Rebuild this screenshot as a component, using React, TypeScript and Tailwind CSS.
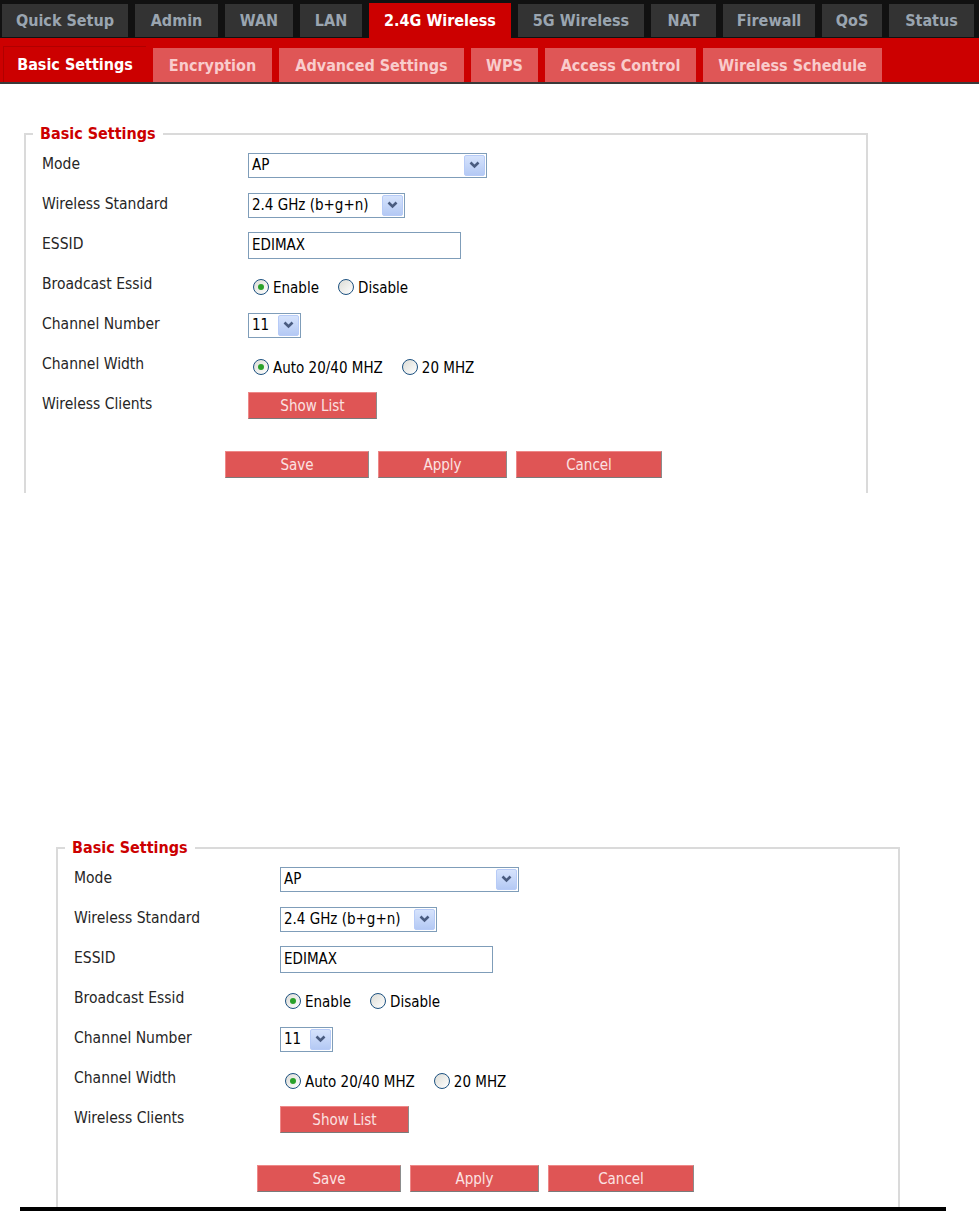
import React from "react";

const tabs = [
  { name: "Quick Setup", w: "w-[126px]" },
  { name: "Admin", w: "w-[83px]" },
  { name: "WAN", w: "w-[68px]" },
  { name: "LAN", w: "w-[62px]" },
  { name: "2.4G Wireless", w: "w-[142px]", active: true },
  { name: "5G Wireless", w: "w-[126px]" },
  { name: "NAT", w: "w-[65px]" },
  { name: "Firewall", w: "w-[92px]" },
  { name: "QoS", w: "w-[60px]" },
  { name: "Status", w: "w-[85px]" },
];

const subTabs = [
  { name: "Basic Settings", w: "w-[143px]", active: true },
  { name: "Encryption", w: "w-[119px]" },
  { name: "Advanced Settings", w: "w-[185px]" },
  { name: "WPS", w: "w-[67px]" },
  { name: "Access Control", w: "w-[151px]" },
  { name: "Wireless Schedule", w: "w-[179px]" },
];

const font = "font-['DejaVu_Sans_Condensed','DejaVu_Sans',sans-serif]";

const TopNav = () => (
  <div className={font}>
    <div className="flex h-[38px] items-end gap-[7px] bg-[#111111] pl-[2px]">
      {tabs.map((t) =>
        t.active ? (
          <div
            key={t.name}
            className={`${t.w} flex h-[35px] items-center justify-center bg-[#cc0000] text-[16px] font-bold text-white`}
          >
            {t.name}
          </div>
        ) : (
          <div
            key={t.name}
            className={`${t.w} mb-[1px] flex h-[33px] items-center justify-center bg-[#333333] text-[16px] font-bold text-[#9aa5b0]`}
          >
            {t.name}
          </div>
        )
      )}
    </div>
    <div className="flex h-[44px] items-end gap-[7px] bg-[#cc0000] pl-[3px]">
      {subTabs.map((t) =>
        t.active ? (
          <div
            key={t.name}
            className={`${t.w} flex h-[36px] items-center justify-center border-l border-t border-[#b00000] bg-[#cc0000] text-[16px] font-bold text-white`}
          >
            {t.name}
          </div>
        ) : (
          <div
            key={t.name}
            className={`${t.w} flex h-[34px] items-center justify-center bg-[#df5656] pt-[2px] text-[16px] font-bold text-[#f9cccc]`}
          >
            {t.name}
          </div>
        )
      )}
    </div>
    <div className="h-[2px] bg-[#3a3a3a]" />
  </div>
);

const Chevron = () => (
  <svg width="11" height="8" viewBox="0 0 11 8">
    <path d="M1.5 1.5 L5.5 5.5 L9.5 1.5" fill="none" stroke="#4a5c80" strokeWidth="2.6" />
  </svg>
);

const Select = ({ value, className }: { value: string; className: string }) => (
  <div
    className={`${className} flex h-[25px] items-center border border-[#7f9db9] bg-white pl-[3px] pr-[1px] text-[15px] text-black`}
  >
    <span className="whitespace-nowrap">{value}</span>
    <div className="ml-auto flex h-[21px] w-[21px] items-center justify-center rounded-[2px] border border-[#b7cbf7] bg-gradient-to-b from-[#d6e3fc] to-[#b4c9f4]">
      <Chevron />
    </div>
  </div>
);

const Radio = ({ checked, label }: { checked?: boolean; label: string }) => (
  <div className="flex items-center pt-[4px]">
    <div className="flex h-[16px] w-[16px] items-center justify-center rounded-full border border-[#1c5180] bg-gradient-to-br from-[#dcdcd6] to-white">
      {checked && <div className="h-[6px] w-[6px] rounded-full bg-[#2aa12a]" />}
    </div>
    <span className="ml-[4px] mt-[3px] whitespace-nowrap text-[15px] text-black">{label}</span>
  </div>
);

const RedButton = ({ label, className }: { label: string; className: string }) => (
  <div
    className={`${className} flex h-[27px] items-center justify-center border border-[#e88] border-b-[#7a7a7a] border-r-[#8c8c8c] bg-[#df5555] pt-[2px] text-[15px] text-[#fbe2e2]`}
  >
    {label}
  </div>
);

const Row = ({ label, children }: { label: string; children: React.ReactNode }) => (
  <div className="flex h-[40px] items-center">
    <div className="w-[206px] text-[15.5px] text-[#262626]">{label}</div>
    {children}
  </div>
);

const BasicSettings = ({ className }: { className: string }) => (
  <fieldset
    className={`${className} w-[844px] border-2 border-b-0 border-[#dadada] pb-[15px] ${font}`}
  >
    <legend className="ml-[7px] px-[7px] text-[16px] font-bold leading-[18px] text-[#cc0000]">
      Basic Settings
    </legend>
    <div className="pl-[16px] pt-[2px]">
      <Row label="Mode">
        <Select value="AP" className="w-[239px]" />
      </Row>
      <Row label="Wireless Standard">
        <Select value="2.4 GHz (b+g+n)" className="w-[157px]" />
      </Row>
      <Row label="ESSID">
        <div className="flex h-[27px] w-[213px] items-center border border-[#7f9db9] pl-[3px] text-[15px] text-black">
          EDIMAX
        </div>
      </Row>
      <Row label="Broadcast Essid">
        <div className="flex items-center gap-[19px] pl-[5px]">
          <Radio checked label="Enable" />
          <Radio label="Disable" />
        </div>
      </Row>
      <Row label="Channel Number">
        <Select value="11" className="w-[53px]" />
      </Row>
      <Row label="Channel Width">
        <div className="flex items-center gap-[19px] pl-[5px]">
          <Radio checked label="Auto 20/40 MHZ" />
          <Radio label="20 MHZ" />
        </div>
      </Row>
      <Row label="Wireless Clients">
        <RedButton label="Show List" className="w-[129px]" />
      </Row>
      <div className="mt-[26px] flex gap-[9px] pl-[183px]">
        <RedButton label="Save" className="w-[144px]" />
        <RedButton label="Apply" className="w-[129px]" />
        <RedButton label="Cancel" className="w-[146px]" />
      </div>
    </div>
  </fieldset>
);

export default function App() {
  return (
    <div className="h-[1211px] w-[979px] overflow-hidden bg-white">
      <TopNav />
      <BasicSettings className="ml-[24px] mt-[41px]" />
      <BasicSettings className="ml-[56px] mt-[346px]" />
      <div className="ml-[20px] h-[4px] w-[926px] bg-black" />
    </div>
  );
}
